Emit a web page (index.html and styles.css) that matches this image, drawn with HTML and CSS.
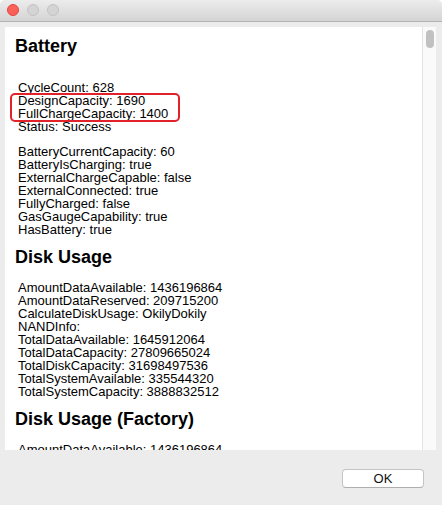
FILE: index.html
```html
<!DOCTYPE html>
<html lang="en">
<head>
    <meta charset="UTF-8">
    <title>Battery Info</title>
    <link rel="stylesheet" href="styles.css">
</head>
<body>
    <div class="window">
        <div class="titlebar">
            <span class="light light-close"></span>
            <span class="light"></span>
            <span class="light"></span>
        </div>
        <div class="body">
            <div class="pane">
                <div class="content">
                    <h2 class="section-title first">Battery</h2>
                    <div class="group lead">
                        <div>CycleCount: 628</div>
                        <div>DesignCapacity: 1690</div>
                        <div>FullChargeCapacity: 1400</div>
                        <div>Status: Success</div>
                    </div>
                    <div class="group">
                        <div>BatteryCurrentCapacity: 60</div>
                        <div>BatteryIsCharging: true</div>
                        <div>ExternalChargeCapable: false</div>
                        <div>ExternalConnected: true</div>
                        <div>FullyCharged: false</div>
                        <div>GasGaugeCapability: true</div>
                        <div>HasBattery: true</div>
                    </div>

                    <h2 class="section-title">Disk Usage</h2>
                    <div class="group">
                        <div>AmountDataAvailable: 1436196864</div>
                        <div>AmountDataReserved: 209715200</div>
                        <div>CalculateDiskUsage: OkilyDokily</div>
                        <div>NANDInfo:</div>
                        <div>TotalDataAvailable: 1645912064</div>
                        <div>TotalDataCapacity: 27809665024</div>
                        <div>TotalDiskCapacity: 31698497536</div>
                        <div>TotalSystemAvailable: 335544320</div>
                        <div>TotalSystemCapacity: 3888832512</div>
                    </div>

                    <h2 class="section-title">Disk Usage (Factory)</h2>
                    <div class="group">
                        <div>AmountDataAvailable: 1436196864</div>
                    </div>

                    <div class="highlight"></div>
                </div>
                <div class="scrollbar">
                    <div class="thumb"></div>
                </div>
            </div>
            <div class="footer">
                <button class="ok-button">OK</button>
            </div>
        </div>
    </div>
</body>
</html>
```

FILE: styles.css
```css
* {
    margin: 0;
    padding: 0;
    box-sizing: border-box;
}

body {
    font-family: "Liberation Sans", Arial, sans-serif;
    background-color: #ffffff;
    color: #000;
}

.window {
    width: 442px;
    height: 505px;
    display: flex;
    flex-direction: column;
    background-color: #ececec;
    border-radius: 5px 5px 0 0;
    overflow: hidden;
}

.titlebar {
    height: 22px;
    display: flex;
    align-items: center;
    gap: 8px;
    padding: 0 0 1px 7px;
    background: linear-gradient(#ececec, #d4d4d4);
    border-bottom: 1px solid #b4b4b4;
}

.light {
    width: 12px;
    height: 12px;
    border-radius: 50%;
    background-color: #d4d4d4;
    border: 1px solid #c2c2c2;
}

.light-close {
    background-color: #fc5f57;
    border-color: #df4744;
}

.body {
    flex: 1;
    display: flex;
    flex-direction: column;
    padding: 5px 6px 0 5px;
}

.pane {
    height: 423px;
    display: flex;
}

.content {
    position: relative;
    flex: 1;
    background-color: #fff;
    overflow: hidden;
    padding-left: 10px;
    font-size: 13px;
    line-height: 13px;
}

.section-title {
    font-size: 18px;
    line-height: 22px;
    font-weight: bold;
    margin: 10px 0 13px;
}

.section-title.first {
    margin-top: 7.5px;
}

.group {
    padding-left: 3px;
}

.group + .group {
    margin-top: 12px;
}

/* blank line under the first heading */
.group.lead {
    padding-top: 11px;
}

.highlight {
    position: absolute;
    left: 5px;
    top: 66px;
    width: 170px;
    height: 29px;
    border: 2px solid #e2222a;
    border-radius: 5px;
}

.scrollbar {
    width: 14px;
    background-color: #fafafa;
    border-left: 1px solid #e4e4e4;
    padding: 3px 0 0 3px;
}

.thumb {
    width: 8px;
    height: 18px;
    border-radius: 4px;
    background-color: #c1c1c1;
}

.footer {
    display: flex;
    justify-content: flex-end;
    padding: 19px 12px 0 0;
}

.ok-button {
    width: 82px;
    height: 19px;
    font-family: "Liberation Sans", Arial, sans-serif;
    font-size: 13px;
    color: #111;
    background-color: #fff;
    border: 1px solid #c4c4c4;
    border-bottom-color: #aeaeae;
    border-radius: 4px;
}
```
